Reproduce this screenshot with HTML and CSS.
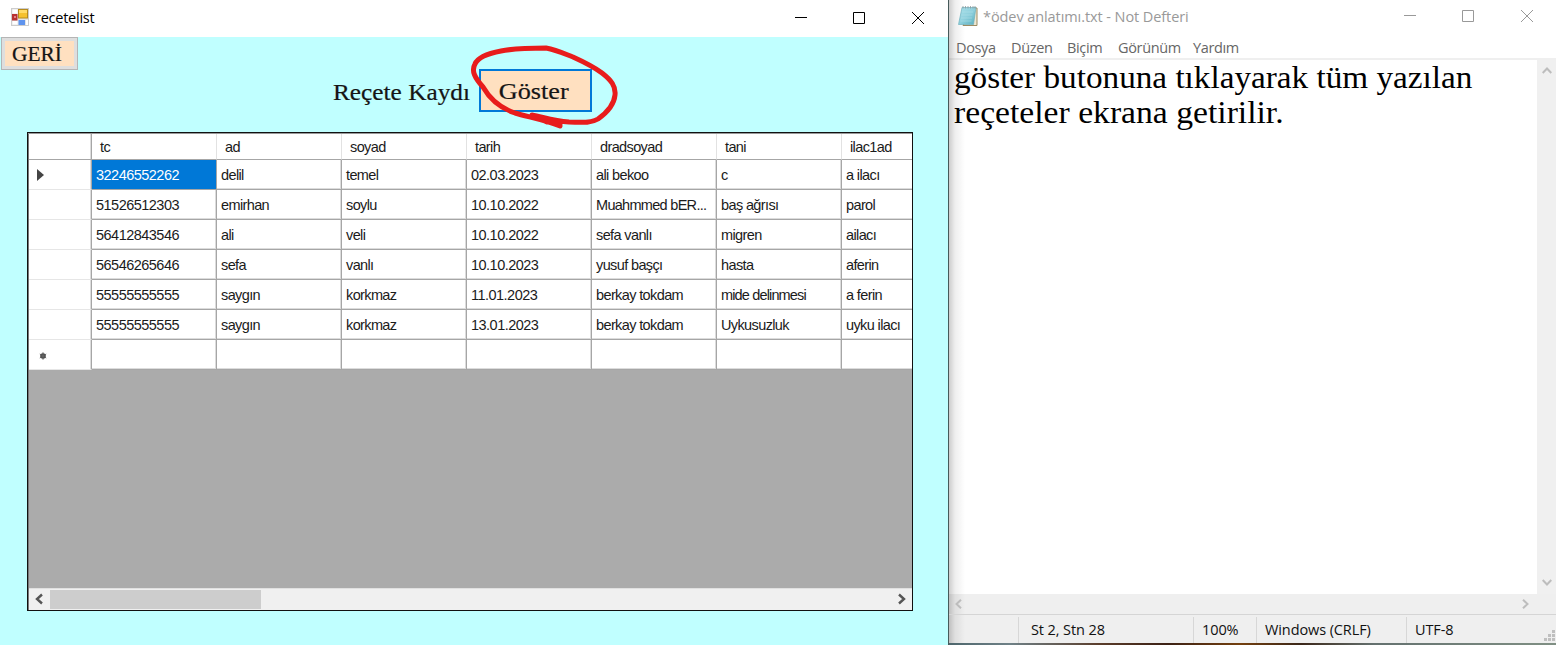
FILE: index.html
```html
<!DOCTYPE html>
<html lang="tr">
<head>
<meta charset="utf-8">
<title>recetelist</title>
<link rel="stylesheet" href="styles.css">
</head>
<body>
<div class="desktop">
  <section class="form-window">
    <header class="form-title">
      <svg class="form-icon" width="18" height="18" viewBox="0 0 18 18"><rect x=".5" y=".5" width="17" height="17" fill="#e4e4e4" stroke="#ccc"/><path d="M1.500 1.500h5v4h-5zM1.500 13h5v3.500h-5zM15 12h2v5h-2z" fill="#fff"/><rect x="1" y="6" width="5.500" height="6.500" fill="#b83232"/><path d="M3 8h2v2H3z" fill="#e28383"/><rect x="7.500" y="1.500" width="9" height="8.500" fill="#f5c12e" stroke="#b58a1c"/><path d="M8 2h8v3H8z" fill="#ffdb67"/><rect x="7.500" y="12" width="6.500" height="5" fill="#5f94ee"/></svg>
      <span class="form-name">recetelist</span>
      <svg class="win-controls" width="129" height="14" viewBox="0 0 129 14" fill="none" stroke="#000"><path d="M0 7.500h12M58.500 2.500h11v11h-11zM117 2l12 12M129 2l-12 12"/></svg>
    </header>
    <main class="form-body">
      <button class="back"><span>GERİ</span></button>
      <div class="toolbar"><span class="caption">Reçete Kaydı</span><button class="show"><span>Göster</span></button>
        <svg class="ink" width="150" height="86" viewBox="468 43 150 86" fill="none" stroke="#e81c1c" stroke-width="5" stroke-linecap="round" stroke-linejoin="round"><path d="M560 126C542 119 528 117 515 113C503 109 491 101 483 87C475 78 471 71 475 64C478 57 490 53 501 51C516 48 532 48 546 48C557 50 565 54 573 57C584 62 594 67 602 73C611 80 616 86 615 95C614 106 605 114 598 119C590 124 578 122 569 122C553 121 543 117 532 115M532 115L547 122M545 120L560 124"/></svg>
      </div>
      <div class="grid">
        <div class="row head"><i></i><b>tc</b><b>ad</b><b>soyad</b><b>tarih</b><b>dradsoyad</b><b>tani</b><b>ilac1ad</b></div>
        <div class="row"><i><svg width="7" height="12" viewBox="0 0 7 12"><path d="M0 0l7 6-7 6z" fill="#444"/></svg></i><span class="num selected">32246552262</span><span>delil</span><span>temel</span><span class="num">02.03.2023</span><span>ali bekoo</span><span>c</span><span>a ilacı</span></div>
        <div class="row"><i></i><span class="num">51526512303</span><span>emirhan</span><span>soylu</span><span class="num">10.10.2022</span><span class="wide">Muahmmed bER...</span><span>baş ağrısı</span><span>parol</span></div>
        <div class="row"><i></i><span class="num">56412843546</span><span>ali</span><span>veli</span><span class="num">10.10.2022</span><span>sefa vanlı</span><span>migren</span><span>ailacı</span></div>
        <div class="row"><i></i><span class="num">56546265646</span><span>sefa</span><span>vanlı</span><span class="num">10.10.2023</span><span>yusuf başçı</span><span>hasta</span><span>aferin</span></div>
        <div class="row"><i></i><span class="num">55555555555</span><span>saygın</span><span>korkmaz</span><span class="num">11.01.2023</span><span>berkay tokdam</span><span class="tight">mide delinmesi</span><span>a ferin</span></div>
        <div class="row"><i></i><span class="num">55555555555</span><span>saygın</span><span>korkmaz</span><span class="num">13.01.2023</span><span>berkay tokdam</span><span>Uykusuzluk</span><span>uyku ilacı</span></div>
        <div class="row last"><i class="new"><svg width="8" height="8" viewBox="0 0 8 8"><circle cx="4" cy="4" r="2.800" fill="#444"/><path d="M4 .3v7.400M.8 2l6.400 4M.8 6l6.400-4" stroke="#666"/></svg></i><span></span><span></span><span></span><span></span><span></span><span></span><span></span></div>
        <div class="grid-scroll">
          <svg width="20" height="20" viewBox="0 0 20 20"><path d="M13 5.500L8 10l5 4.500" fill="none" stroke="#555" stroke-width="2.400"/></svg>
          <div class="thumb"></div>
          <svg class="right-arrow" width="21" height="20" viewBox="0 0 21 20"><path d="M8 5.500l5 4.500-5 4.500" fill="none" stroke="#555" stroke-width="2.400"/></svg>
        </div>
      </div>
    </main>
  </section>
  <section class="notepad">
    <header class="note-title">
      <svg class="note-icon" width="20" height="21" viewBox="0 0 20 21"><defs><linearGradient id="pad" x1="0" y1="0" x2="1" y2="1"><stop stop-color="#a9e0ea"/><stop offset=".5" stop-color="#8fd0dd"/><stop offset="1" stop-color="#58aebe"/></linearGradient></defs><path d="M16 2h3v17.500H5z" fill="#eee7d2" stroke="#9c8b63"/><path d="M4 1.500h14l-2.500 17H.5z" fill="url(#pad)" stroke="#6fb0bd" stroke-width=".7"/><path d="M4 6h11M3.500 9h11M3 12h11M2.500 15h11" stroke="#b4e0e8" stroke-width=".5"/><path d="M5 0v2.500M7.500 0v2.500M10 0v2.500M12.500 0v2.500M15 0v2.500M17 0v2.500" stroke="#8b999c" stroke-width=".8"/></svg>
      <span class="note-name">*ödev anlatımı.txt - Not Defteri</span>
      <svg class="note-controls" width="130" height="14" viewBox="0 0 130 14" fill="none" stroke="#999"><path d="M0 6.500h12M58.500 1.500h11v11h-11zM117 1l12 12M129 1l-12 12"/></svg>
    </header>
    <nav class="menu"><span class="m1">Dosya</span><span class="m2">Düzen</span><span class="m3">Biçim</span><span class="m4">Görünüm</span><span class="m5">Yardım</span></nav>
    <div class="editor">
      <div class="text"><p class="line1">göster butonuna tıklayarak tüm yazılan</p><p class="line2">reçeteler ekrana getirilir.</p></div>
      <div class="vscroll"><svg width="10" height="7" viewBox="0 0 10 7"><path d="M.7 6L5 1.500 9.300 6"/></svg><svg width="10" height="7" viewBox="0 0 10 7"><path d="M.7 1L5 5.500 9.300 1"/></svg></div>
    </div>
    <div class="hscroll"><svg width="7" height="10" viewBox="0 0 7 10"><path d="M6 .7L1.500 5 6 9.300"/></svg><svg width="7" height="10" viewBox="0 0 7 10"><path d="M1 .7L5.500 5 1 9.300"/></svg></div>
    <footer class="status"><span class="s0"></span><span class="s1">St 2, Stn 28</span><span class="s2">100%</span><span class="s3">Windows (CRLF)</span><span class="s4">UTF-8</span>
      <svg class="grip" width="11" height="11" viewBox="0 0 11 11"><path d="M8 0h3v3H8zM4 4h3v3H4zM8 4h3v3H8zM0 8h3v3H0zM4 8h3v3H4zM8 8h3v3H8z" fill="#bfbfbf"/></svg>
    </footer>
    <div class="wallpaper"></div>
  </section>
</div>
</body>
</html>
```

FILE: styles.css
```css
* { box-sizing: border-box; }
body { margin: 0; overflow: hidden; font-family: "Open Sans", sans-serif; }
button { margin: 0; padding: 0; font: inherit; display: flex; align-items: center; justify-content: center; border-radius: 0; background: #ffe0c0; color: #151515; }
p { margin: 0; }
.desktop { display: flex; width: 1556px; height: 645px; }

.form-window { width: 949px; height: 645px; border-right: 1px solid #465a5a; background: #c0ffff; }
.form-title { height: 37px; background: #fff; display: flex; padding: 8px 24px 0 11px; }
.form-name { margin-left: 6px; font-size: 14.5px; line-height: 20px; letter-spacing: -.25px; }
.win-controls { margin: 2px 0 0 auto; }
.form-body { height: 608px; padding-left: 1px; }
.back { width: 77px; height: 33px; border: 1px solid #b5b5b5; box-shadow: inset 0 0 0 3px #dedede; font: 20.5px "Liberation Serif", serif; }
.back span { transform: translate(-3px, 1px) scaleX(1.045); -webkit-text-stroke: .2px; }
.toolbar { position: relative; height: 62px; display: flex; padding-left: 332px; }
.caption { width: 146px; font: 23px/46px "Liberation Serif", serif; color: #151515; transform: scaleX(1.1); transform-origin: left; -webkit-text-stroke: .2px; white-space: nowrap; }
.show { width: 113px; height: 43px; margin-top: -1px; border: 2px solid #0078d7; font: 23px "Liberation Serif", serif; }
.show span { transform: translate(-2px, 1px) scaleX(1.14); -webkit-text-stroke: .2px; }
.ink { position: absolute; left: 467px; top: -27px; }

.grid { width: 886px; height: 479px; margin-left: 26px; border: 1px solid #111; box-shadow: inset 0 1px #999, inset 1px 0 #777; background: #ababab; display: flex; flex-direction: column; overflow: hidden; padding: 1px 0 0 1px; }
.row { display: grid; grid-template-columns: 63px repeat(7, 125px); grid-template-rows: 100%; height: 30px; flex: none; font: 14.5px/30px "Liberation Sans", sans-serif; color: #1b1b1b; letter-spacing: -.62px; }
.row > * { background: #fff; border-right: 1px solid #a6a6a6; border-bottom: 1px solid #a6a6a6; box-shadow: inset -1px -1px #dcdcdc; padding-left: 4px; white-space: nowrap; }
.row > i { border-bottom-color: #e6e6e6; box-shadow: inset -1px 0 #dcdcdc; padding-left: 8px; }
.row > i svg { display: block; margin-top: 9px; }
.row > i.new svg { margin: 12px 0 0 2px; }
.row .num { letter-spacing: -.52px; }
.row .wide { letter-spacing: -.7px; }
.row .tight { letter-spacing: -.85px; }
.row .selected { background: #0078d7; color: #fff; box-shadow: none; }
.row.head { height: 26px; line-height: 26px; }
.row.head b { font-weight: normal; padding-left: 8px; border-right-color: #e2e2e2; box-shadow: none; }
.row.head i { border-bottom-color: #a6a6a6; }
.grid-scroll { display: flex; height: 22px; margin-top: auto; background: #f0f0f0; border-top: 1px solid #e0e0e0; width: 883px; }
.thumb { width: 211px; height: 19px; margin-left: 1px; margin-top: 1px; background: #cdcdcd; }
.right-arrow { margin-left: auto; }

.notepad { width: 607px; height: 645px; background: linear-gradient(90deg, #0003, #0001 6px, #0000 16px), #fff; display: flex; flex-direction: column; }
.note-title { display: flex; height: 37px; padding: 6px 22px 0 9px; }
.note-name { margin-left: 5px; font-size: 14.5px; line-height: 22px; color: #999; letter-spacing: -.08px; }
.note-controls { margin: 3px 0 0 auto; }
.menu { display: flex; height: 23px; padding-left: 7px; font-size: 14.5px; line-height: 21px; color: #666; letter-spacing: -.35px; border-bottom: 2px solid #00000010; }
.m1 { width: 55px; } .m2 { width: 56px; } .m3 { width: 51px; } .m4 { width: 75px; }
.editor { display: flex; height: 534px; }
.text { flex: 1; padding-left: 5px; font: 32.5px/35px "Liberation Serif", serif; white-space: nowrap; }
.text p { transform-origin: left; width: max-content; }
.line1 { transform: scaleX(1.022); }
.line2 { transform: scaleX(1.035); }
.vscroll { width: 19px; background: #f0f0f0; display: flex; flex-direction: column; align-items: center; justify-content: space-between; padding: 7px 0 8px; }
.vscroll path, .hscroll path { fill: none; stroke: #bdbdbd; stroke-width: 2; }
.hscroll { display: flex; justify-content: space-between; align-items: center; height: 20px; padding: 0 27px 0 6px; background: #00000010; }
.status { display: flex; height: 29px; padding-top: 2px; border-top: 1px solid #d5d5d5; background: #00000010; font-size: 14.5px; line-height: 25px; color: #111; letter-spacing: -.1px; white-space: nowrap; }
.status span { height: 26px; border-right: 1px solid #d7d7d7; }
.s0 { width: 70px; } .s1 { width: 175px; padding-left: 12px; } .s2 { width: 63px; padding-left: 8px; } .s3 { width: 150px; padding-left: 8px; }
.s1 { letter-spacing: -.1px; }
.status .s4 { padding-left: 8px; border: 0; }
.grip { margin: 13px 1px 0 auto; }
.wallpaper { height: 2px; background: linear-gradient(90deg, #4d666c 0, #6f8187 10%, #5a3c2a 25%, #3c2115 36%, #74400f 48%, #3b2719 58%, #64716f 70%, #809084); }
```
